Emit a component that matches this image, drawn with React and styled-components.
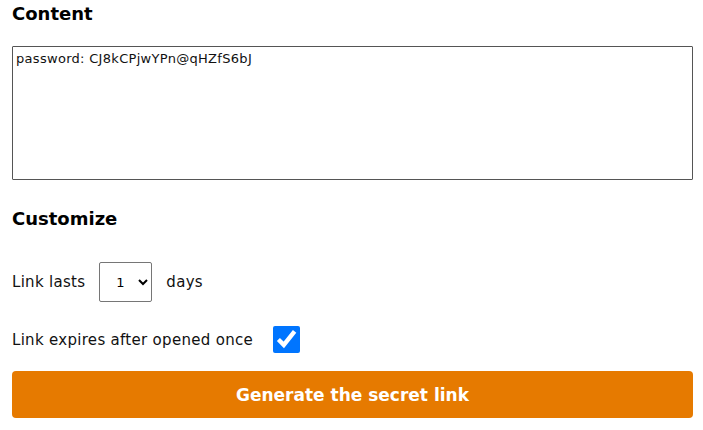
import React, { useState } from 'react';
import styled, { createGlobalStyle } from 'styled-components';

const Global = createGlobalStyle`
  body {
    margin: 0;
    background: #fff;
    font-family: "DejaVu Sans", "Noto Sans", sans-serif;
    color: #111;
  }
`

const Page = styled.div`
  padding: 0 10px 0 12px;
`
const Heading = styled.h2`
  margin: 0;
  font-size: 18px;
  font-weight: 700;
  line-height: 28px;
  color: #000;
`
const Area = styled.textarea`
  display: block;
  box-sizing: border-box;
  width: 100%;
  height: 134px;
  margin: 18px 0 25px;
  padding: 4px 3px;
  border: 1px solid #555;
  border-radius: 1px;
  font-family: inherit;
  font-size: 13px;
  letter-spacing: 0.3px;
  color: #111;
  resize: none;
  outline: 0;
`
const Row = styled.div`
  display: flex;
  align-items: center;
  gap: ${p => p.gap || 16}px;
  font-size: 15px;
  letter-spacing: 0.3px;
  margin-top: ${p => p.top || 0}px;
`
const Select = styled.select`
  width: 53px;
  height: 40px;
  padding: 0 4px 0 12px;
  border: 1px solid #767676;
  border-radius: 2px;
  background: #fff;
  font-family: inherit;
  font-size: 13px;
`
const Check = styled.input`
  width: 27px;
  height: 27px;
  margin: 0;
  accent-color: #0075ff;
`
const Button = styled.button`
  display: block;
  width: 100%;
  height: 47px;
  margin-top: 18px;
  border: 0;
  border-radius: 4px;
  background: #e67a00;
  color: #fff;
  font-family: inherit;
  font-size: 17px;
  font-weight: 700;
`

const App = () => {
  let [text, setText] = useState("password: CJ8kCPjwYPn@qHZfS6bJ");
  let [days, setDays] = useState("1");
  let [once, setOnce] = useState(true);
  return (
    <Page>
      <Global />
      <Heading>Content</Heading>
      <Area value={text} onChange={e => setText(e.currentTarget.value)} />
      <Heading>Customize</Heading>
      <Row top={29} gap={14}>
        Link lasts
        <Select value={days} onChange={e => setDays(e.currentTarget.value)}>
          {[1, 2, 3, 4, 5, 6, 7].map(d => <option key={d} value={d}>{d}</option>)}
        </Select>
        days
      </Row>
      <Row top={24} gap={20}>
        Link expires after opened once
        <Check type="checkbox" checked={once} onChange={e => setOnce(e.currentTarget.checked)} />
      </Row>
      <Button>Generate the secret link</Button>
    </Page>
  )
}

export default App;
